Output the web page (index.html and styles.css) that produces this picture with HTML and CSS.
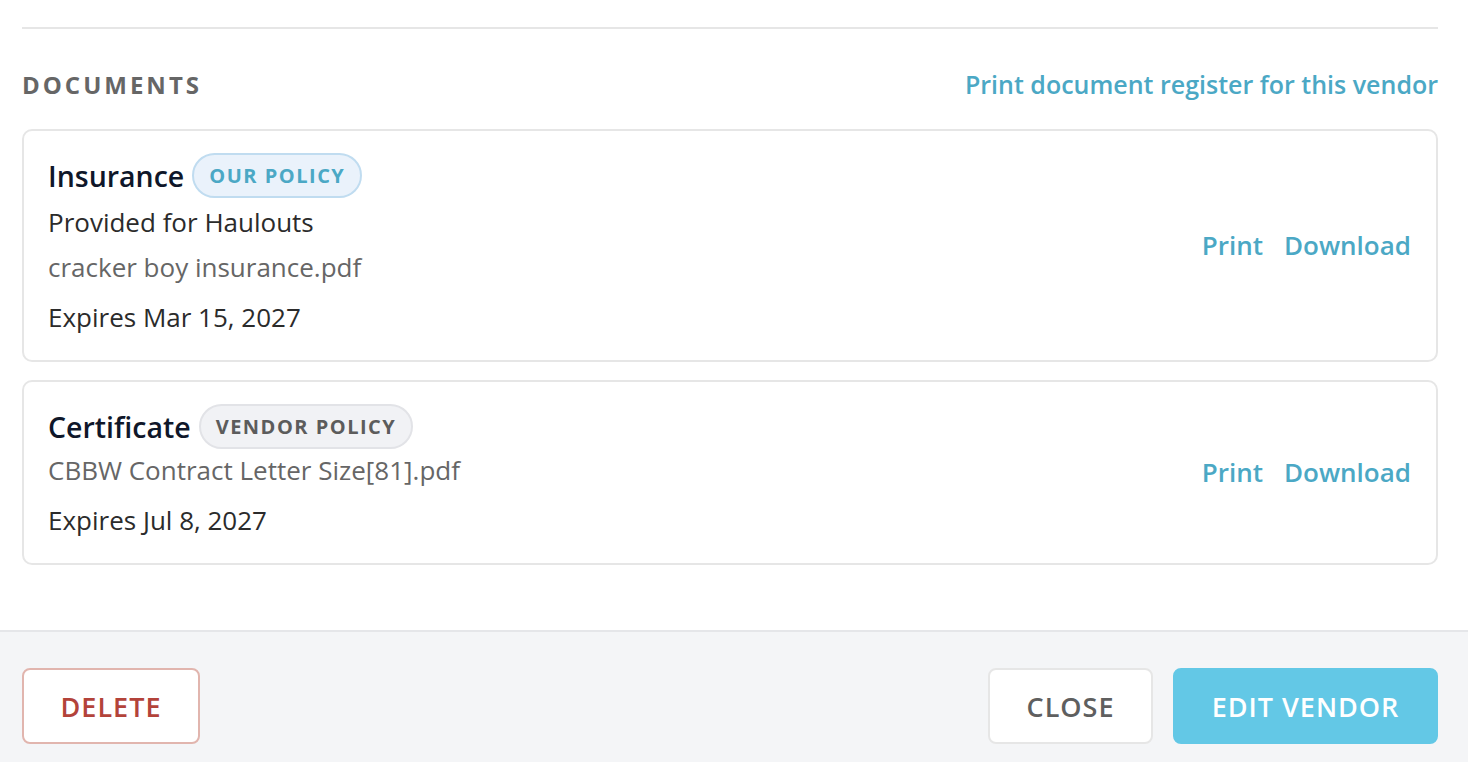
FILE: index.html
```html
<!DOCTYPE html>
<html lang="en">
<head>
<meta charset="utf-8">
<title>Vendor documents</title>
<link rel="stylesheet" href="styles.css">
</head>
<body>
<div class="page">
  <main class="content">
    <hr class="divider">
    <div class="section-head">
      <h2 class="section-title">DOCUMENTS</h2>
      <a class="link register-link" href="#">Print document register for this vendor</a>
    </div>
    <div class="doc-list">
      <div class="doc-card">
        <div class="doc-info">
          <div class="doc-title-row">
            <span class="doc-title">Insurance</span>
            <span class="badge badge-ours">OUR POLICY</span>
          </div>
          <div class="doc-desc">Provided for Haulouts</div>
          <div class="doc-file doc-file-after-desc">cracker boy insurance.pdf</div>
          <div class="doc-expiry">Expires Mar 15, 2027</div>
        </div>
        <div class="doc-actions">
          <a class="link action-link" href="#">Print</a>
          <a class="link action-link" href="#">Download</a>
        </div>
      </div>
      <div class="doc-card">
        <div class="doc-info">
          <div class="doc-title-row">
            <span class="doc-title">Certificate</span>
            <span class="badge badge-vendor">VENDOR POLICY</span>
          </div>
          <div class="doc-file doc-file-first">CBBW Contract Letter Size[81].pdf</div>
          <div class="doc-expiry">Expires Jul 8, 2027</div>
        </div>
        <div class="doc-actions">
          <a class="link action-link" href="#">Print</a>
          <a class="link action-link" href="#">Download</a>
        </div>
      </div>
    </div>
  </main>
  <footer class="footer">
    <button class="btn btn-delete">DELETE</button>
    <div class="footer-right">
      <button class="btn btn-close">CLOSE</button>
      <button class="btn btn-primary">EDIT VENDOR</button>
    </div>
  </footer>
</div>
</body>
</html>
```

FILE: styles.css
```css
* { box-sizing: border-box; }

html, body {
  margin: 0;
  padding: 0;
  height: 100%;
  overflow: hidden;
}

body {
  font-family: "Open Sans", "Liberation Sans", sans-serif;
  background: #ffffff;
  color: #222;
}

.page {
  display: flex;
  flex-direction: column;
  height: 762px;
}

.content {
  padding: 27px 30px 0 22px;
  flex: 1;
}

.divider {
  border: 0;
  border-top: 2px solid #e6e6e6;
  margin: 0;
}

.section-head {
  display: flex;
  justify-content: space-between;
  align-items: center;
  margin-top: 37px;
  height: 36px;
}

.section-title {
  margin: 0;
  font-size: 24px;
  font-weight: 700;
  letter-spacing: 3px;
  color: #666666;
}

.link {
  color: #4ba8c5;
  text-decoration: none;
  font-weight: 600;
}

.register-link {
  font-size: 25px;
}

.doc-list {
  display: flex;
  flex-direction: column;
  gap: 18px;
  margin-top: 27px;
}

.doc-card {
  display: flex;
  justify-content: space-between;
  align-items: center;
  border: 2px solid #e6e6e6;
  border-radius: 10px;
  padding: 22px 25px 23px 24px;
}

.doc-title-row {
  display: flex;
  align-items: center;
  height: 45px;
}

.doc-title {
  font-size: 28.5px;
  font-weight: 600;
  color: #0f172a;
}

.badge {
  margin-left: 8px;
  height: 45px;
  display: inline-flex;
  align-items: center;
  padding: 0 15px;
  border-radius: 23px;
  font-size: 20px;
  font-weight: 700;
  letter-spacing: 1.5px;
}

.badge-ours {
  background: #eaf2fb;
  border: 2px solid #c0dcf0;
  color: #4ba8c5;
}

.badge-vendor {
  background: #f1f2f5;
  border: 2px solid #e2e3e7;
  color: #5c5c5c;
}

.doc-desc,
.doc-file,
.doc-expiry {
  font-size: 26px;
  line-height: 40px;
}

.doc-desc {
  color: #2b2b2b;
  margin-top: 4px;
}

.doc-file {
  color: #666666;
}

.doc-file-first {
  margin-top: 1px;
}

.doc-file-after-desc {
  margin-top: 5px;
}

.doc-expiry {
  color: #2b2b2b;
  margin-top: 10px;
}

.doc-actions {
  display: flex;
  gap: 21px;
}

.action-link {
  font-size: 26px;
}

.footer {
  background: #f4f5f7;
  border-top: 2px solid #e5e6e9;
  display: flex;
  justify-content: space-between;
  align-items: flex-start;
  padding: 36px 30px 0 22px;
  height: 132px;
}

.footer-right {
  display: flex;
  gap: 20px;
}

.btn {
  font-family: "Open Sans", "Liberation Sans", sans-serif;
  height: 76px;
  border-radius: 8px;
  font-size: 27px;
  font-weight: 600;
  letter-spacing: 1px;
  cursor: pointer;
  padding: 0;
  white-space: nowrap;
  display: inline-flex;
  align-items: center;
  justify-content: center;
}

.btn-delete {
  background: #ffffff;
  border: 2px solid #e1b5ae;
  color: #b3433a;
  width: 178px;
}

.btn-close {
  background: #ffffff;
  border: 2px solid #e6e6e6;
  color: #5f5f5f;
  width: 165px;
}

.btn-primary {
  background: #63c8e6;
  border: 2px solid #63c8e6;
  color: #ffffff;
  width: 265px;
}
```
